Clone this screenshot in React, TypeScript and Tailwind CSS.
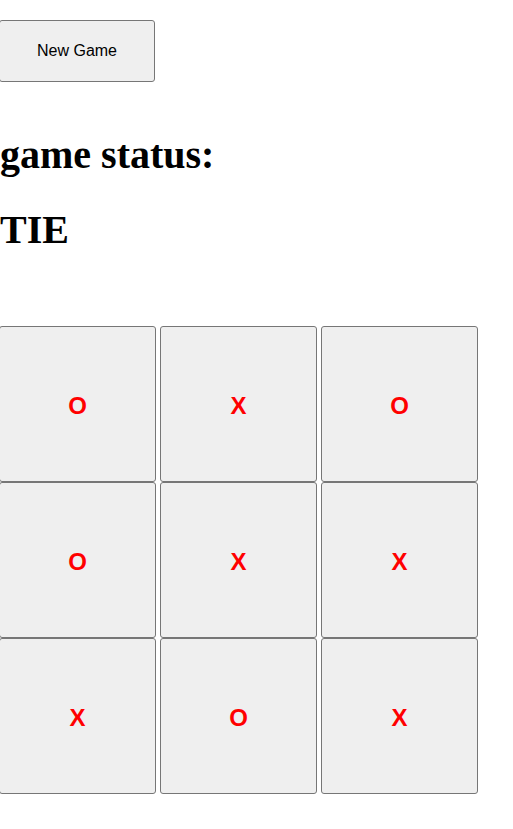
import type { FC } from "react";

const board = [
  ["O", "X", "O"],
  ["O", "X", "X"],
  ["X", "O", "X"],
];

const Cell: FC<{ value: string }> = ({ value }) => (
  <button className="w-[157px] h-[156px] shrink-0 bg-[#efefef] border border-[#767676] rounded-[3px] flex items-center justify-center pt-[4px] text-[24px] font-bold text-[#ff0000] [font-family:'Liberation_Sans',Arial,sans-serif]">
    {value}
  </button>
);

export default function App() {
  return (
    <div className="bg-white min-h-[829px] text-black -ml-px">
      <button className="mt-[20px] block w-[156px] h-[62px] bg-[#efefef] border border-[#767676] rounded-[3px] text-[16px] text-black [font-family:'Liberation_Sans',Arial,sans-serif]">
        New Game
      </button>
      <h1 className="ml-px mt-[50px] h-[45px] leading-[45px] text-[40px] font-bold [font-family:'Liberation_Serif','Times_New_Roman',serif]">
        game status:
      </h1>
      <h1 className="ml-px mt-[30px] h-[45px] leading-[45px] text-[40px] font-bold [font-family:'Liberation_Serif','Times_New_Roman',serif]">
        TIE
      </h1>
      <div className="mt-[74px] flex flex-col">
        {board.map((row, i) => (
          <div key={i} className="flex gap-[4px]">
            {row.map((v, j) => (
              <Cell key={j} value={v} />
            ))}
          </div>
        ))}
      </div>
    </div>
  );
}
